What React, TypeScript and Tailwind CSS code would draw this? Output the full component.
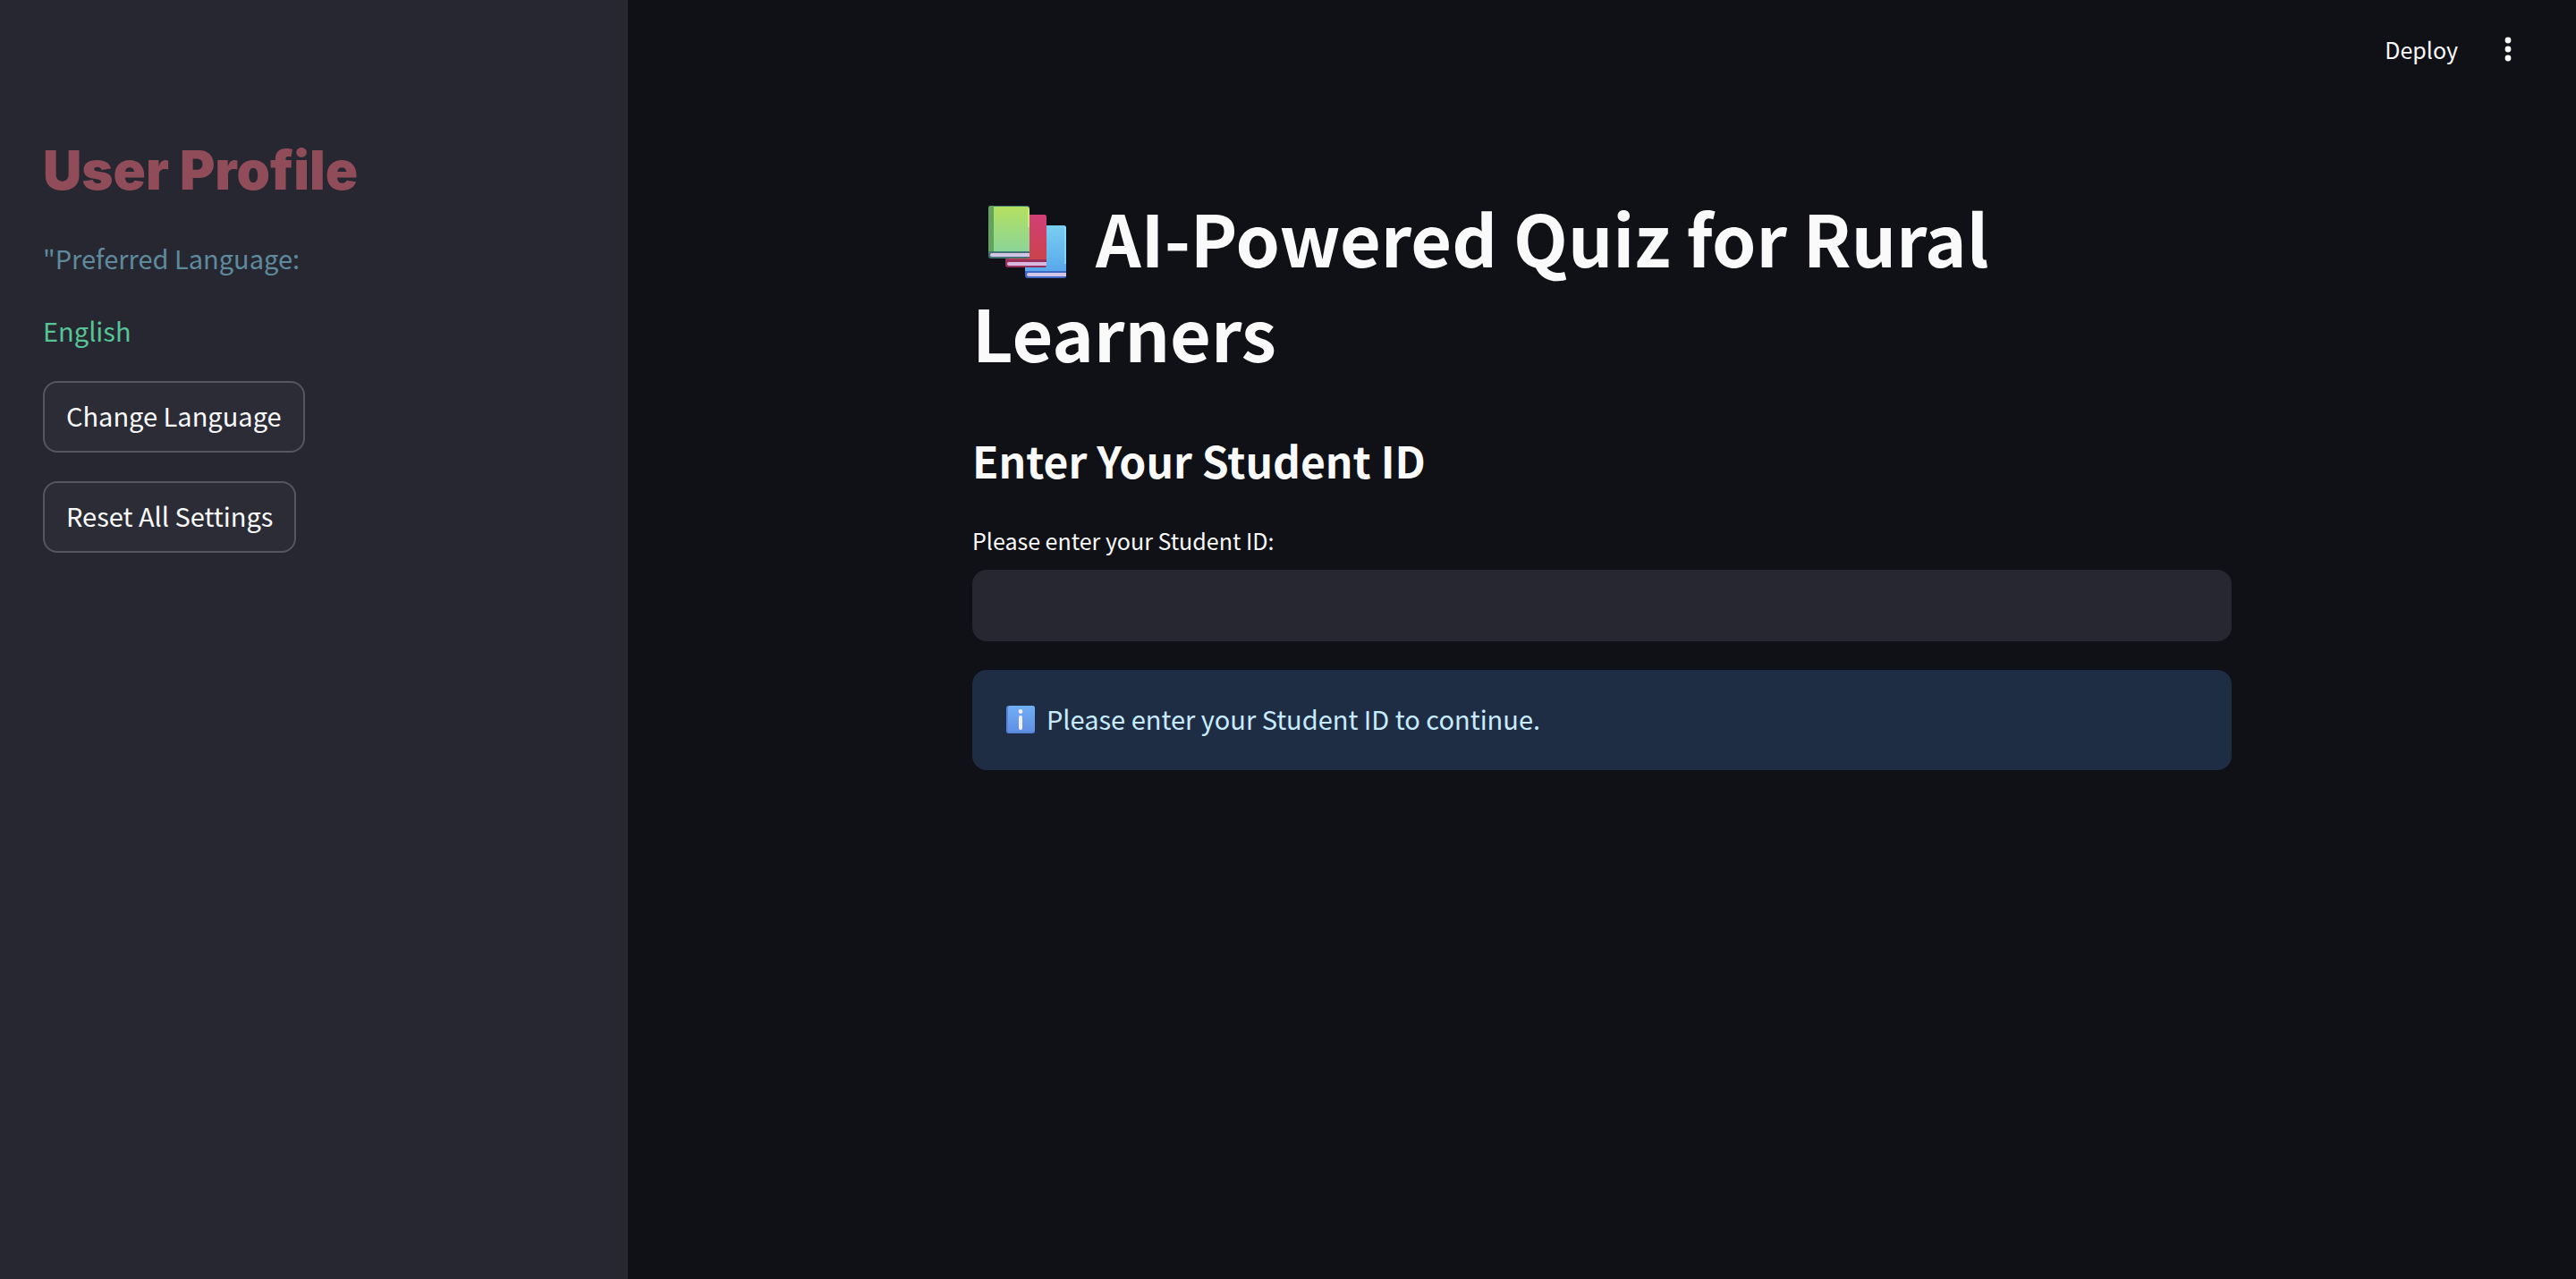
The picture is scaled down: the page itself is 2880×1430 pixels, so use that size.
import React from "react";

function BookStack() {
  return (
    <svg viewBox="0 0 120 88" className="inline-block h-[88px] w-[120px] align-[-15px]" role="img" aria-label="Books">
      <defs>
        <linearGradient id="green" x1="0" y1="0" x2="0" y2="1">
          <stop offset="0" stopColor="#b5e060" />
          <stop offset="1" stopColor="#8bd598" />
        </linearGradient>
        <linearGradient id="red" x1="0" y1="0" x2="0" y2="1">
          <stop offset="0" stopColor="#d23f78" />
          <stop offset="1" stopColor="#cb434b" />
        </linearGradient>
        <linearGradient id="blue" x1="0" y1="0" x2="0" y2="1">
          <stop offset="0" stopColor="#79cff0" />
          <stop offset="1" stopColor="#58a8ec" />
        </linearGradient>
      </defs>
      <path d="M59 30a4 4 0 0 1 4-4h39a3 3 0 0 1 3 3v54a2 2 0 0 1-2 2H62a3 3 0 0 1-3-3Z" fill="#3d68c4" />
      <path d="M59 30a4 4 0 0 1 4-4h39a3 3 0 0 1 3 3v48H59Z" fill="url(#blue)" />
      <path d="M103 27h1l1 2v40h-2Z" fill="#8be4fa" opacity="0.7" />
      <path d="M61 81a2 2 0 0 1 2-2h42v4H63a2 2 0 0 1-2-2Z" fill="#d3c4e8" />
      <path d="M37 18a4 4 0 0 1 4-4h39a3 3 0 0 1 3 3v54a2 2 0 0 1-2 2H40a3 3 0 0 1-3-3Z" fill="#98305d" />
      <path d="M41 14h39a3 3 0 0 1 3 3v47H41Z" fill="url(#red)" />
      <path d="M39 69a2 2 0 0 1 2-2h42v4H41a2 2 0 0 1-2-2Z" fill="#d9b9df" />
      <path d="M18 7a3 3 0 0 1 3-3h40a3 3 0 0 1 3 3v54a2 2 0 0 1-2 2H21a3 3 0 0 1-3-3Z" fill="#3f7573" />
      <path d="M18 7a3 3 0 0 1 3-3h3v51h-6Z" fill="#62a45c" />
      <path d="M24 5h37a3 3 0 0 1 3 3v47H24Z" fill="url(#green)" />
      <path d="M62 6l2 2v20h-2Z" fill="#c6f57c" opacity="0.8" />
      <path d="M20 59a2 2 0 0 1 2-2h42v4H22a2 2 0 0 1-2-2Z" fill="#d3c4e8" />
    </svg>
  );
}

function InfoBadge() {
  return (
    <svg viewBox="0 0 44 32" className="h-8 w-11 shrink-0" role="img" aria-label="Information">
      <defs>
        <linearGradient id="info" x1="0" y1="0" x2="0" y2="1">
          <stop offset="0" stopColor="#70aff5" />
          <stop offset="1" stopColor="#6290e4" />
        </linearGradient>
      </defs>
      <rect x="6" y="0" width="32" height="31" rx="3" fill="#5686dc" />
      <rect x="8" y="0" width="30" height="29" rx="3" fill="url(#info)" />
      <circle cx="22" cy="6.5" r="2.4" fill="#f3eefd" />
      <rect x="20" y="11" width="4" height="16" rx="2" fill="#f3eefd" />
    </svg>
  );
}

function SidebarButton({ children }: { children: React.ReactNode }) {
  return (
    <button
      type="button"
      className="h-20 rounded-2xl border-2 border-[#55565f] bg-[#2b2c36] px-6 pb-1 text-[29px] leading-[49px] text-[#fafafa]"
    >
      {children}
    </button>
  );
}

export default function App() {
  return (
    <div className="flex min-h-screen bg-[#0f1116] font-['Noto_Sans_CJK_SC',sans-serif] text-[#fafafa]">
      <aside className="flex w-[702px] shrink-0 flex-col items-start gap-8 bg-[#262730] px-12 pt-[156px]">
        <h2 className="pb-2 font-['Inter',sans-serif] text-[60px] leading-[68px] font-black text-[#904c59]">
          User Profile
        </h2>
        <p className="text-[29px] leading-[49px] text-[#5f8a9d]">"Preferred Language:</p>
        <p className="text-[29px] leading-[49px] text-[#56c596]">English</p>
        <SidebarButton>Change Language</SidebarButton>
        <SidebarButton>Reset All Settings</SidebarButton>
      </aside>

      <div className="flex min-w-0 flex-1 flex-col">
        <header className="flex h-[110px] items-center justify-end gap-4 pr-12">
          <button type="button" className="px-3 text-[25px] leading-10">
            Deploy
          </button>
          <button type="button" aria-label="Main menu" className="flex size-14 items-center justify-center">
            <svg viewBox="0 0 40 40" className="size-10" fill="#fafafa" aria-hidden="true">
              <circle cx="20" cy="10" r="3.4" />
              <circle cx="20" cy="20" r="3.4" />
              <circle cx="20" cy="30" r="3.4" />
            </svg>
          </button>
        </header>

        <main className="mx-auto flex w-full max-w-[1472px] flex-col px-8 pt-[102px]">
          <h1 className="text-[79px] leading-[106px] font-bold">
            <BookStack /> AI-Powered Quiz for Rural Learners
          </h1>
          <h3 className="mt-14 text-5xl leading-[68px] font-bold">Enter Your Student ID</h3>
          <label htmlFor="student-id" className="mt-9 text-[25px] leading-10">
            Please enter your Student ID:
          </label>
          <input
            id="student-id"
            type="text"
            className="mt-[13px] h-20 w-full rounded-2xl bg-[#262730] px-6 text-[29px] outline-none"
          />
          <div role="alert" className="mt-8 flex h-28 items-center gap-[7px] rounded-2xl bg-[#1f2d44] px-8 text-[#c7ebff]">
            <InfoBadge />
            <p className="pb-1 text-[29px] leading-[49px]">Please enter your Student ID to continue.</p>
          </div>
        </main>
      </div>
    </div>
  );
}
